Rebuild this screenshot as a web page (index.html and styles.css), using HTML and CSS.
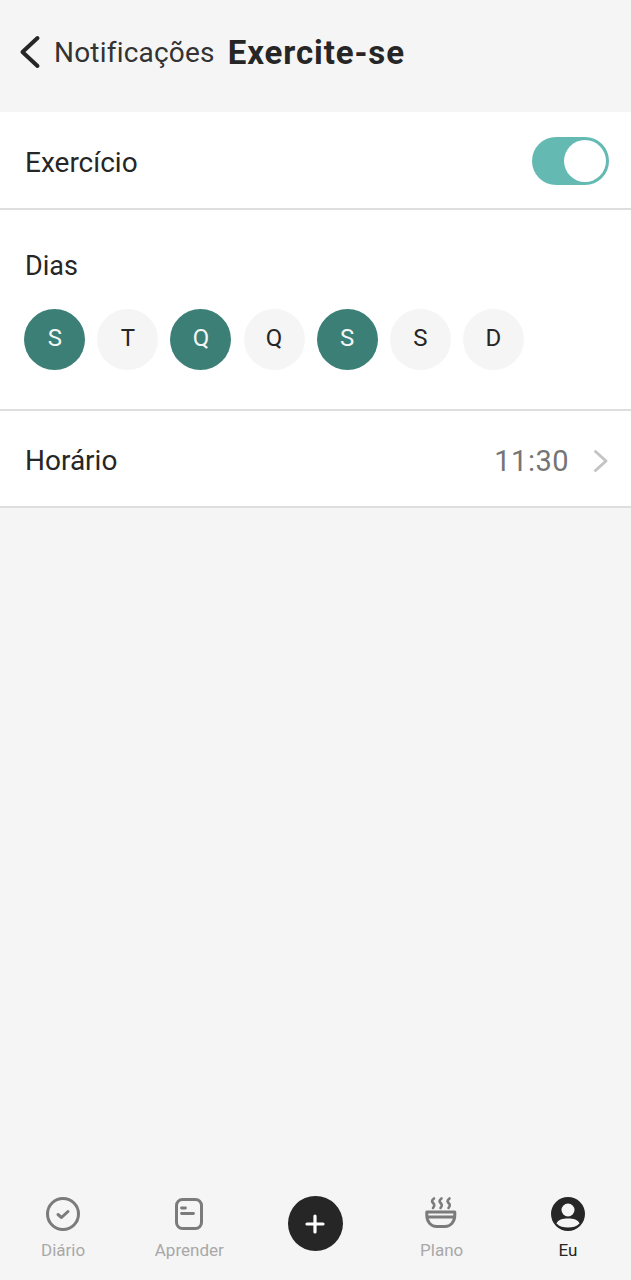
FILE: index.html
```html
<!DOCTYPE html>
<html lang="pt-BR">
<head>
    <meta charset="UTF-8">
    <meta name="viewport" content="width=device-width, initial-scale=1.0">
    <title>Exercite-se</title>
    <link rel="stylesheet" href="styles.css">
</head>
<body>
    <div class="screen">
        <header class="top-bar">
            <svg class="back-icon" width="22" height="34" viewBox="0 0 22 34">
                <path d="M18.500 3 L3.500 17 L18.500 31" fill="none" stroke="#262626" stroke-width="4" stroke-linecap="round" stroke-linejoin="round"/>
            </svg>
            <span class="back-label">Notificações</span>
            <h1 class="page-title">Exercite-se</h1>
        </header>

        <section class="row row-toggle">
            <span class="row-label">Exercício</span>
            <div class="toggle"><div class="toggle-thumb"></div></div>
        </section>

        <section class="days">
            <div class="row-label">Dias</div>
            <div class="day-list">
                <div class="day day-on">S</div>
                <div class="day">T</div>
                <div class="day day-on">Q</div>
                <div class="day">Q</div>
                <div class="day day-on">S</div>
                <div class="day">S</div>
                <div class="day">D</div>
            </div>
        </section>

        <section class="row row-time">
            <span class="row-label">Horário</span>
            <div class="time-value">
                <span class="time-text">11:30</span>
                <svg width="16" height="24" viewBox="0 0 16 24">
                    <path d="M2.500 2.500 L13 12 L2.500 21.500" fill="none" stroke="#c4c4c4" stroke-width="3" stroke-linecap="round" stroke-linejoin="round"/>
                </svg>
            </div>
        </section>

        <div class="spacer"></div>

        <nav class="bottom-nav">
            <div class="nav-item">
                <svg width="36" height="36" viewBox="0 0 36 36">
                    <circle cx="18" cy="18" r="15.500" fill="none" stroke="#7b7b7b" stroke-width="3"/>
                    <path d="M13 18.500 L16.500 21.500 L23 15.500" fill="none" stroke="#7b7b7b" stroke-width="3" stroke-linecap="round" stroke-linejoin="round"/>
                </svg>
                <span>Diário</span>
            </div>
            <div class="nav-item">
                <svg width="36" height="36" viewBox="0 0 36 36">
                    <rect x="5.500" y="3.500" width="25" height="29" rx="6" fill="none" stroke="#7b7b7b" stroke-width="3"/>
                    <path d="M10.500 12 H14.500 M10.500 17.500 H22.500" fill="none" stroke="#7b7b7b" stroke-width="2.800" stroke-linecap="round"/>
                </svg>
                <span>Aprender</span>
            </div>
            <div class="nav-item">
                <div class="add-button">
                    <svg width="20" height="20" viewBox="0 0 20 20">
                        <path d="M10 2 V18 M2 10 H18" stroke="#fff" stroke-width="3.200" stroke-linecap="round"/>
                    </svg>
                </div>
            </div>
            <div class="nav-item">
                <svg width="36" height="36" viewBox="0 0 36 36">
                    <path d="M10 2.500 C7.500 4.500 7.500 5.500 9.500 7.500 C11 9 10.500 10 9 12 M17.500 2.500 C15 4.500 15 5.500 17 7.500 C18.500 9 18 10 16.500 12 M25.500 2.500 C23 4.500 23 5.500 25 7.500 C26.500 9 26 10 24.500 12" fill="none" stroke="#7b7b7b" stroke-width="2.600" stroke-linecap="round"/>
                    <path d="M2.800 16 H30.800 V19 C30.800 26 26.500 30.500 21 30.500 H12.500 C7 30.500 2.800 26 2.800 19 Z M2.800 21 H30.800" fill="none" stroke="#7b7b7b" stroke-width="3" stroke-linejoin="round"/>
                </svg>
                <span>Plano</span>
            </div>
            <div class="nav-item nav-active">
                <svg width="36" height="36" viewBox="0 0 36 36">
                    <circle cx="18" cy="18" r="17" fill="#262626"/>
                    <circle cx="18" cy="14" r="6.500" fill="#f5f5f5"/>
                    <path d="M6.500 27.500 C8 23.500 12.500 22.500 18 22.500 C23.500 22.500 28 23.500 29.500 27.500 C26.500 30.500 22.500 31.500 18 31.500 C13.500 31.500 9.500 30.500 6.500 27.500 Z" fill="#f5f5f5"/>
                </svg>
                <span>Eu</span>
            </div>
        </nav>
    </div>
</body>
</html>
```

FILE: styles.css
```css
* {
    margin: 0;
    padding: 0;
    box-sizing: border-box;
}

body {
    background: #f5f5f5;
    color: #262626;
    font-family: "Roboto", "Liberation Sans", sans-serif;
}

.screen {
    height: 1280px;
    display: flex;
    flex-direction: column;
}

.top-bar {
    height: 112px;
    display: flex;
    align-items: center;
    padding: 0 0 8px 19px;
}

.back-icon {
    margin-right: 13px;
}

.back-label {
    font-size: 28px;
    letter-spacing: 0.2px;
    margin-right: 13px;
    color: #333;
}

.page-title {
    font-size: 33px;
    font-weight: 700;
    letter-spacing: 0.9px;
    color: #262626;
}

.row {
    background: #fff;
    display: flex;
    align-items: center;
    justify-content: space-between;
    padding: 0 22px 0 25px;
}

.row-toggle {
    height: 98px;
    border-bottom: 2px solid #dedede;
    padding-top: 2px;
}

.row-label {
    font-size: 28px;
    color: #262626;
}

.row-toggle .row-label {
    padding-top: 2px;
}

.toggle {
    width: 77px;
    height: 48px;
    border-radius: 24px;
    background: #64bab3;
    display: flex;
    align-items: center;
    justify-content: flex-end;
    padding-right: 3px;
}

.toggle-thumb {
    width: 42px;
    height: 42px;
    border-radius: 50%;
    background: #fff;
}

.days {
    height: 201px;
    background: #fff;
    border-bottom: 2px solid #dedede;
    padding: 39px 25px 0 24.300px;
}

.days .row-label {
    padding-left: 0.7px;
    font-size: 27px;
    line-height: 34px;
}

.day-list {
    display: flex;
    gap: 12.100px;
    margin-top: 26px;
}

.day {
    width: 61px;
    height: 61px;
    padding-bottom: 3px;
    border-radius: 50%;
    background: #f5f5f5;
    display: flex;
    align-items: center;
    justify-content: center;
    font-size: 24px;
    color: #262626;
}

.day-on {
    background: #3b7f76;
    color: #f2f7f6;
}

.row-time {
    height: 97px;
    border-bottom: 2px solid #dedede;
    padding-top: 4px;
}

.time-value {
    display: flex;
    align-items: center;
    gap: 24px;
}

.time-text {
    font-size: 29px;
    color: #757575;
    letter-spacing: 0.5px;
}

.spacer {
    flex: 1;
}

.bottom-nav {
    height: 104px;
    padding-top: 20px;
    display: grid;
    grid-template-columns: repeat(5, 1fr);
}

.nav-item {
    display: flex;
    flex-direction: column;
    align-items: center;
    gap: 8px;
    font-size: 17px;
    color: #a8a8a8;
}

.nav-active {
    color: #262626;
}

.add-button {
    width: 55px;
    height: 55px;
    border-radius: 50%;
    background: #262626;
    display: flex;
    align-items: center;
    justify-content: center;
}
```
